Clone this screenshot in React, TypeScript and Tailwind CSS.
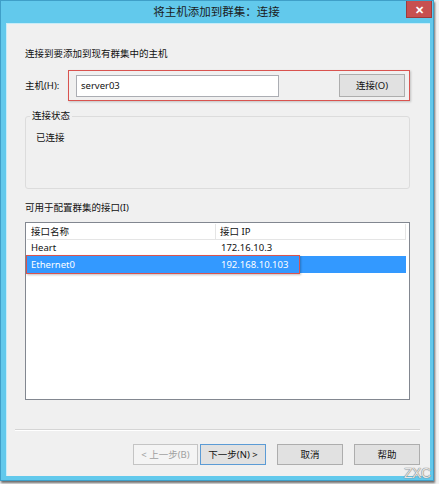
import React from 'react';

const font = "font-['Noto_Sans','Noto_Sans_CJK_SC',sans-serif]";

export default function App() {
    return (
        <div className={`relative w-[439px] h-[484px] bg-[#f2f2f2] ${font} text-[9.5px] leading-[12px] text-[#111]`}>
            <div className="w-[434px] h-[481px] flex flex-col bg-[#62c9ec] border border-[#3f9fc8] shadow-[1px_2px_2px_rgba(0,0,0,0.55)]">
                <div className="h-[22px] flex items-start shrink-0">
                    <div className="w-[26px]" />
                    <div className="flex-1 text-center text-[11.5px] leading-[22px] text-[#1b1b1b]">将主机添加到群集：连接</div>
                    <div className="w-[26px] h-[17px] mr-[1px] bg-[#c75050] border border-t-0 border-[#9e3b3b] flex items-center justify-center text-white text-[11px] font-bold leading-none">
                        ✕
                    </div>
                </div>

                <div className="flex-1 ml-[5px] mr-[3px] mb-[4px] bg-[#f0f0f0] border-l border-t border-[#c8ecf8] flex flex-col pl-[18px] pr-[20px] pt-[24px]">
                    <div>连接到要添加到现有群集中的主机</div>

                    <div className="flex items-center mt-[10px] h-[31px]">
                        <span className="w-[43px] shrink-0">主机(H):</span>
                        <div className="flex items-center justify-between w-[346px] h-[31px] border-[1.5px] border-[#d9534f] shadow-[1px_1px_2px_rgba(0,0,0,0.2)] pl-[7px] pr-[4px]">
                            <div className="w-[203px] h-[22px] bg-white border border-[#abadb3] flex items-center px-[4px]">server03</div>
                            <button className="w-[66px] h-[23px] bg-[#e1e1e1] border border-[#adadad] text-[9.5px]">连接(O)</button>
                        </div>
                    </div>

                    <fieldset className="mt-[9px] h-[79px] border border-[#dcdcdc] rounded-[3px]">
                        <legend className="ml-[4px] px-[2px] leading-[12px]">连接状态</legend>
                        <div className="mt-[10px] pl-[10px]">已连接</div>
                    </fieldset>

                    <div className="mt-[13px]">可用于配置群集的接口(I)</div>

                    <div className="mt-[8px] h-[178px] w-[385px] bg-white border border-[#828790] p-[1px] pr-[3px]">
                        <div className="flex h-[16px] border-b border-[#e5e5e5] border-r">
                            <div className="w-[189px] border-r border-[#e5e5e5] pl-[4px] leading-[15px]">接口名称</div>
                            <div className="flex-1 pl-[4px] leading-[15px]">接口 IP</div>
                        </div>
                        <div className="flex h-[16px] items-center">
                            <div className="w-[189px] pl-[4px]">Heart</div>
                            <div className="flex-1 pl-[5px]">172.16.10.3</div>
                        </div>
                        <div className="relative flex h-[17px] items-center bg-[#3399ff] text-white">
                            <div className="w-[189px] pl-[4px]">Ethernet0</div>
                            <div className="flex-1 pl-[5px]">192.168.10.103</div>
                            <span className="absolute -left-[1px] -top-[1px] w-[274px] h-[19px] border-[1.5px] border-[#d9534f] shadow-[1px_1px_2px_rgba(0,0,0,0.25)]" />
                        </div>
                    </div>

                    <div className="mt-[29px] -ml-[10px] w-[405px] border-t border-[#d5d5d5] border-b border-b-white" />

                    <div className="flex mt-[13px] -ml-[10px] w-[405px] justify-end">
                        <button className="w-[65px] h-[21px] bg-[#f4f4f4] border border-[#c4c4c4] text-[#a0a0a0] text-[9.5px]">&lt; 上一步(B)</button>
                        <button className="ml-[2px] w-[66px] h-[21px] bg-[#e1e1e1] border border-[#5b9bd5] text-[9.5px]">下一步(N) &gt;</button>
                        <button className="ml-[11px] w-[66px] h-[21px] bg-[#e1e1e1] border border-[#adadad] text-[9.5px]">取消</button>
                        <button className="ml-[11px] w-[66px] h-[21px] bg-[#e1e1e1] border border-[#adadad] text-[9.5px]">帮助</button>
                    </div>
                </div>
            </div>
            <span className="absolute left-[404px] top-[466px] text-[14px] leading-[15px] text-[#e4e4e4] tracking-[-0.5px] [text-shadow:0_0_1px_#666,0_0_1px_#888] font-['Liberation_Sans',sans-serif]">ZXC</span>
        </div>
    );
}
